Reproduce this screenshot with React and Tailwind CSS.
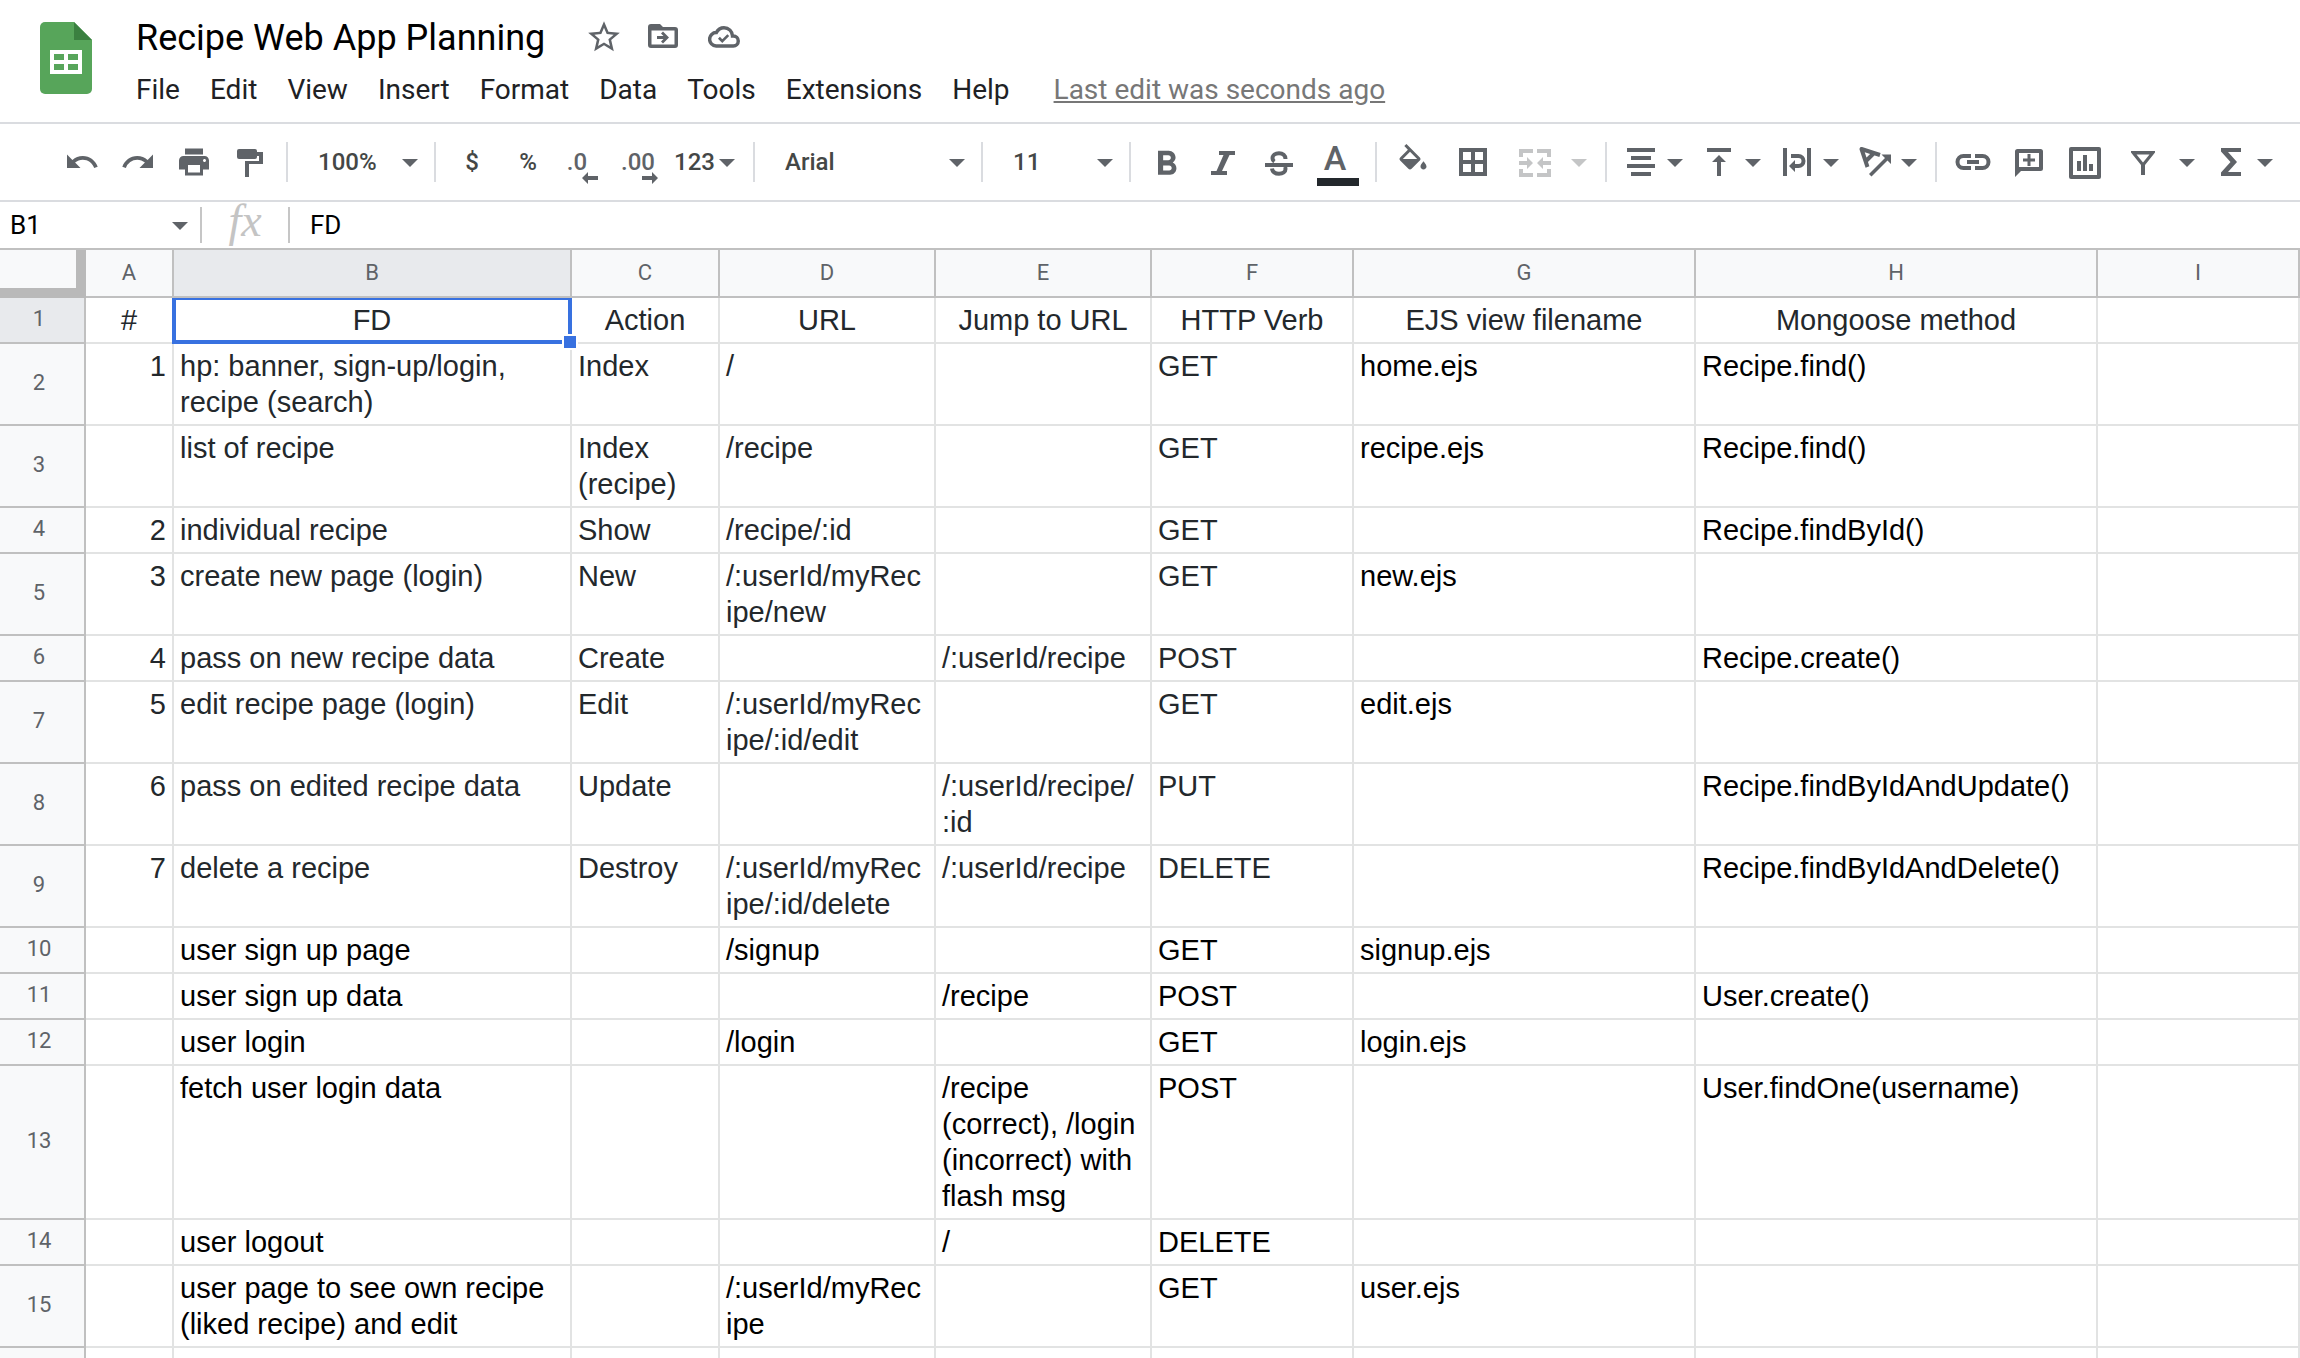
import React from "react";
import { MdStarBorder, MdUndo, MdRedo, MdPrint, MdFormatBold } from "react-icons/md";

const Svg = ({ children, className = "" }) => (
  <svg viewBox="0 0 36 36" className={`size-9 shrink-0 ${className}`} fill="currentColor" aria-hidden="true">
    {children}
  </svg>
);

const Caret = ({ className = "" }) => (
  <svg viewBox="0 0 16 12" className={`h-3 w-4 shrink-0 ${className}`} fill="currentColor" aria-hidden="true">
    <path d="M0 3h16l-8 8z" />
  </svg>
);

const Divider = ({ className = "mx-2" }) => <div className={`h-10 w-0.5 shrink-0 bg-[#dadce0] ${className}`} />;

const Tool = ({ label, className = "w-14", children }) => (
  <button type="button" aria-label={label} className={`flex h-14 shrink-0 items-center justify-center ${className}`}>
    {children}
  </button>
);

const MenuTool = ({ label, className = "", children }) => (
  <button type="button" aria-label={label} className={`flex h-14 w-[78px] shrink-0 items-center gap-2 pl-2 ${className}`}>
    {children}
    <Caret />
  </button>
);

const Drop = ({ label, value, className }) => (
  <div className={`relative shrink-0 ${className}`}>
    <select
      aria-label={label}
      defaultValue={value}
      className="h-14 w-full appearance-none bg-transparent pl-[22px] font-medium text-[#444746] outline-none"
    >
      <option>{value}</option>
    </select>
    <Caret className="pointer-events-none absolute top-[22px] right-2" />
  </div>
);

const PaintRoller = () => (
  <Svg>
    <path d="M7 5h16a2 2 0 0 1 2 2v1h6v12H17v13h-4V17h14v-5h-2v1a2 2 0 0 1-2 2H7a2 2 0 0 1-2-2V7a2 2 0 0 1 2-2z" />
  </Svg>
);

const Italic = () => (
  <Svg>
    <path d="M14 7h16v4h-5.500l-7.500 16H22v4H6v-4h5.500l7-16H14z" />
  </Svg>
);

const Strike = () => (
  <Svg>
    <path d="M4 19h28v4H4z" />
    <path
      d="M24.500 15c0-3.500-2.700-5.800-6.500-5.800-3.800 0-6.500 2-6.500 4.800 0 1.500.6 2.700 1.900 3.600M11 24.500c.3 3.200 3 5.300 7 5.300 3.900 0 6.500-1.900 6.500-4.800 0-.9-.2-1.600-.6-2.300"
      fill="none"
      stroke="currentColor"
      strokeWidth="4"
    />
  </Svg>
);

const Bucket = () => (
  <svg viewBox="0 0 24 24" className="size-9 shrink-0" fill="currentColor" aria-hidden="true">
    <path d="M16.560 8.940L7.620 0 6.210 1.410l2.380 2.380-5.150 5.150a1.490 1.490 0 0 0 0 2.120l5.500 5.500c.29.29.68.44 1.060.44s.77-.15 1.060-.44l5.500-5.500c.59-.58.59-1.530 0-2.120zM5.210 10L10 5.210 14.790 10zM19 11.500s-2 2.170-2 3.500c0 1.100.9 2 2 2s2-.9 2-2c0-1.330-2-3.500-2-3.500z" />
  </svg>
);

const Borders = () => (
  <Svg>
    <path fillRule="evenodd" d="M4 4h28v28H4zM8 8v8h8V8zM20 8v8h8V8zM8 20v8h8v-8zM20 20v8h8v-8z" />
  </Svg>
);

const Merge = () => (
  <Svg>
    <path d="M2 5h14v4H6v4H2zM20 5h14v8h-4V9H20zM2 25h4v4h10v4H2zM30 25h4v8H20v-4h10zM2 17h8v-4l6 6-6 6v-4H2zM34 17h-8v-4l-6 6 6 6v-4h8z" />
  </Svg>
);

const AlignCenter = () => (
  <Svg>
    <path d="M4 4h28v4H4zM8 12h20v4H8zM4 20h28v4H4zM8 28h20v4H8z" />
  </Svg>
);

const AlignTop = () => (
  <Svg>
    <path d="M6 4h24v4H6zM18 11l7 7h-5v14h-4V18h-5z" />
  </Svg>
);

const Wrap = () => (
  <Svg>
    <path d="M4 4h4v28H4zM28 4h4v28h-4zM10 22l6-6v12z" />
    <path d="M12 12h7.500a5 5 0 0 1 0 10H15" fill="none" stroke="currentColor" strokeWidth="4" />
  </Svg>
);

const Rotate = () => (
  <Svg>
    <path d="M23 11L4.500 5l6 18M16.500 9.500l-7.500 7.500" fill="none" stroke="currentColor" strokeWidth="4" strokeLinejoin="round" />
    <path d="M12 30L28 14l-3.500-3.500H34V20l-3.500-3.500-16 16z" />
  </Svg>
);

const LinkIcon = () => (
  <Svg>
    <path
      d="M16 12H8.500a6 6 0 0 0 0 12H16M20 12h7.500a6 6 0 0 1 0 12H20M12 18h12"
      fill="none"
      stroke="currentColor"
      strokeWidth="4"
    />
  </Svg>
);

const Comment = () => (
  <Svg>
    <path fillRule="evenodd" d="M6.500 5h23A2.500 2.500 0 0 1 32 7.500v17a2.500 2.500 0 0 1-2.500 2.500H10l-6 6V7.500A2.500 2.500 0 0 1 6.500 5zM8 9v14h20V9z" />
    <path d="M16.500 10h3v4.500H24v3h-4.500V22h-3v-4.500H12v-3h4.500z" />
  </Svg>
);

const Chart = () => (
  <Svg>
    <path fillRule="evenodd" d="M4 3h28a2 2 0 0 1 2 2v28a2 2 0 0 1-2 2H4a2 2 0 0 1-2-2V5a2 2 0 0 1 2-2zM6 7v24h24V7z" />
    <path d="M10 17h4v10h-4zM16 11h4v16h-4zM22 20h4v7h-4z" />
  </Svg>
);

const Filter = () => (
  <Svg>
    <path fillRule="evenodd" d="M6 7h24v1.500L20 21v10h-4V21L6 8.500zM11.500 10.500L18 18.500l6.500-8z" />
  </Svg>
);

const Sigma = () => (
  <Svg>
    <path d="M8 4h20v4H15l9 10-9 10h13v4H8v-3.500L17.500 18 8 7.500z" />
  </Svg>
);

const DecimalArrow = ({ flip }) => (
  <svg
    viewBox="0 0 16 12"
    className={`absolute top-[38px] h-3 w-4 ${flip ? "right-2.5" : "right-3.5"}`}
    fill="currentColor"
    aria-hidden="true"
  >
    <path d={flip ? "M16 6l-6-6v4H0v4h10v4z" : "M0 6l6-6v4h10v4H6v4z"} />
  </svg>
);

const menus = ["File", "Edit", "View", "Insert", "Format", "Data", "Tools", "Extensions", "Help"];

function Header() {
  return (
    <header className="flex pb-3.5 pl-10">
      <svg viewBox="0 0 52 72" className="mt-[22px] h-[72px] w-[52px] shrink-0" role="img" aria-label="Sheets">
        <path d="M5 0h29l18 18v49a5 5 0 0 1-5 5H5a5 5 0 0 1-5-5V5a5 5 0 0 1 5-5z" fill="#57a55a" />
        <path d="M34 0l18 18H34z" fill="#3b8040" />
        <path fillRule="evenodd" fill="#fff" d="M10 28h32v24H10zM14 32v6h10v-6zM28 32v6h10v-6zM14 42v6h10v-6zM28 42v6h10v-6z" />
      </svg>
      <div className="ml-11 pt-4">
        <div className="flex h-11 items-center text-[#5f6368]">
          <h1 className="text-[36px] whitespace-nowrap text-black">Recipe Web App Planning</h1>
          <div className="flex items-center pb-0.5 pl-10">
            <button type="button" aria-label="Star">
              <MdStarBorder className="size-[38px]" />
            </button>
            <button type="button" aria-label="Move" className="ml-[22px]">
              <Svg>
                <path
                  fillRule="evenodd"
                  d="M6 5h9l3 3h12a3 3 0 0 1 3 3v15a3 3 0 0 1-3 3H6a3 3 0 0 1-3-3V8a3 3 0 0 1 3-3zM6.500 11.500v14h23v-14z"
                />
                <path d="M18 12.500l6 6-6 6-2-2 2.500-2.500H12v-3h6.500L16 14.500z" />
              </Svg>
            </button>
            <button type="button" aria-label="Saved to Drive" className="ml-[27px]">
              <svg viewBox="0 0 24 24" className="size-8" fill="none" stroke="currentColor" strokeWidth="2.600" aria-hidden="true">
                <path d="M18.400 11.300A6.400 6.400 0 0 0 12 5c-2.400 0-4.600 1.400-5.700 3.700A4.850 4.850 0 0 0 6.100 18.700H19a3.700 3.700 0 0 0 0-7.400z" />
                <path d="M8.200 12.600l2.500 2.500 4.500-4.500" strokeWidth="2" />
              </svg>
            </button>
          </div>
        </div>
        <nav className="mt-3 flex h-9 items-center gap-[30px] text-[28px] whitespace-nowrap text-[#202124]">
          {menus.map((m) => (
            <button key={m} type="button">{m}</button>
          ))}
          <a href="#history" className="ml-3.5 text-[#777] underline underline-offset-2">Last edit was seconds ago</a>
        </nav>
      </div>
    </header>
  );
}

function Toolbar() {
  return (
    <div
      role="toolbar"
      aria-label="Formatting"
      className="flex h-20 items-center overflow-hidden border-y-2 border-[#dadce0] pl-[54px] text-[24px] font-medium text-[#5f6368]"
    >
      <Tool label="Undo"><MdUndo className="size-9" /></Tool>
      <Tool label="Redo"><MdRedo className="size-9" /></Tool>
      <Tool label="Print"><MdPrint className="size-9" /></Tool>
      <Tool label="Paint format"><PaintRoller /></Tool>
      <Divider />
      <Drop label="Zoom" value="100%" className="w-[130px]" />
      <Divider />
      <Tool label="Currency" className="w-14 text-[#444746]">$</Tool>
      <Tool label="Percent" className="w-14 text-[#444746]">%</Tool>
      <Tool label="Decrease decimals" className="relative w-14 pr-3.5">.0<DecimalArrow /></Tool>
      <Tool label="Increase decimals" className="relative w-14 pr-1">.00<DecimalArrow flip /></Tool>
      <Tool label="Number formats" className="w-[77px] gap-1 pr-1">
        <span className="text-[#444746]">123</span>
        <Caret />
      </Tool>
      <Divider />
      <Drop label="Font" value="Arial" className="w-[210px]" />
      <Divider />
      <Drop label="Font size" value="11" className="w-[130px]" />
      <Divider />
      <Tool label="Bold"><MdFormatBold viewBox="1.75 0 21 21" className="size-9" /></Tool>
      <Tool label="Italic"><Italic /></Tool>
      <Tool label="Strikethrough"><Strike /></Tool>
      <Tool label="Text color" className="relative w-14 pb-2 text-[34px]">
        A
        <span className="absolute right-1 bottom-1 h-2 w-[42px] bg-[#23282c]" />
      </Tool>
      <Divider className="mr-2 ml-3" />
      <Tool label="Fill color"><Bucket /></Tool>
      <Tool label="Borders" className="w-16"><Borders /></Tool>
      <Tool label="Merge cells" className="w-[60px] text-[#c4c5c6]"><Merge /></Tool>
      <Tool label="Merge type" className="w-7 text-[#c4c5c6]"><Caret /></Tool>
      <Divider className="mr-2 ml-3" />
      <MenuTool label="Horizontal align"><AlignCenter /></MenuTool>
      <MenuTool label="Vertical align"><AlignTop /></MenuTool>
      <MenuTool label="Text wrapping"><Wrap /></MenuTool>
      <MenuTool label="Text rotation"><Rotate /></MenuTool>
      <Divider />
      <Tool label="Insert link"><LinkIcon /></Tool>
      <Tool label="Insert comment"><Comment /></Tool>
      <Tool label="Insert chart"><Chart /></Tool>
      <Tool label="Create a filter" className="w-[60px]"><Filter /></Tool>
      <Tool label="Filter views" className="w-7"><Caret /></Tool>
      <MenuTool label="Functions" className="ml-1"><Sigma /></MenuTool>
    </div>
  );
}

function FormulaBar() {
  return (
    <div className="flex h-12 items-center border-b-2 border-[#c0c0c0] text-[26px] text-black">
      <input aria-label="Name box" defaultValue="B1" className="h-full w-[172px] shrink-0 pl-2.5 outline-none" />
      <button type="button" aria-label="Named ranges" className="mr-3 text-[#5f6368]">
        <Caret className="block" />
      </button>
      <div className="h-9 w-0.5 shrink-0 bg-[#c6c6c6]" />
      <label
        htmlFor="formula"
        className="w-[86px] shrink-0 pb-2 text-center font-['Liberation_Serif',serif] text-[46px] leading-9 text-[#c4c4c4] italic"
      >
        fx
      </label>
      <div className="h-9 w-0.5 shrink-0 bg-[#c6c6c6]" />
      <input id="formula" defaultValue="FD" className="h-full min-w-0 flex-1 pl-5 outline-none" />
    </div>
  );
}

const columns = [
  ["A", "w-[88px]"],
  ["B", "w-[398px]"],
  ["C", "w-[148px]"],
  ["D", "w-[216px]"],
  ["E", "w-[216px]"],
  ["F", "w-[202px]"],
  ["G", "w-[342px]"],
  ["H", "w-[402px]"],
  ["I", ""],
];

const rows = [
  ["#", "FD", "Action", "URL", "Jump to URL", "HTTP Verb", "EJS view filename", "Mongoose method", ""],
  ["1", "hp: banner, sign-up/login,\nrecipe (search)", "Index", "/", "", "GET", "home.ejs", "Recipe.find()", ""],
  ["", "list of recipe", "Index\n(recipe)", "/recipe", "", "GET", "recipe.ejs", "Recipe.find()", ""],
  ["2", "individual recipe", "Show", "/recipe/:id", "", "GET", "", "Recipe.findById()", ""],
  ["3", "create new page (login)", "New", "/:userId/myRec\nipe/new", "", "GET", "new.ejs", "", ""],
  ["4", "pass on new recipe data", "Create", "", "/:userId/recipe", "POST", "", "Recipe.create()", ""],
  ["5", "edit recipe page (login)", "Edit", "/:userId/myRec\nipe/:id/edit", "", "GET", "edit.ejs", "", ""],
  ["6", "pass on edited recipe data", "Update", "", "/:userId/recipe/\n:id", "PUT", "", "Recipe.findByIdAndUpdate()", ""],
  ["7", "delete a recipe", "Destroy", "/:userId/myRec\nipe/:id/delete", "/:userId/recipe", "DELETE", "", "Recipe.findByIdAndDelete()", ""],
  ["", "user sign up page", "", "/signup", "", "GET", "signup.ejs", "", ""],
  ["", "user sign up data", "", "", "/recipe", "POST", "", "User.create()", ""],
  ["", "user login", "", "/login", "", "GET", "login.ejs", "", ""],
  ["", "fetch user login data", "", "", "/recipe\n(correct), /login\n(incorrect) with\nflash msg", "POST", "", "User.findOne(username)", ""],
  ["", "user logout", "", "", "/", "DELETE", "", "", ""],
  ["", "user page to see own recipe\n(liked recipe) and edit", "", "/:userId/myRec\nipe", "", "GET", "user.ejs", "", ""],
];

function Cell({ text, row, col }) {
  const align = row === 0 ? "text-center" : col === 0 ? "text-right" : "text-left";
  const color = row === 0 || (row < 9 && col < 6) ? "text-[#23282c]" : "text-black";
  const selected = row === 0 && col === 1;
  return (
    <td className={`relative h-[46px] border-r-2 border-b-2 border-[#e2e3e3] px-1.5 py-1 align-top whitespace-pre ${align} ${color}`}>
      {text}
      {selected && (
        <>
          <span className="absolute top-0 -right-0.5 -bottom-0.5 -left-0.5 z-10 border-x-4 border-t-2 border-b-4 border-[#3871e0]" />
          <span className="absolute -right-1.5 -bottom-1.5 z-20 size-3 bg-[#3871e0] outline-2 outline-white" />
        </>
      )}
    </td>
  );
}

const rowHead =
  "border-r-2 border-b-2 border-[#c0c0c0] p-0 pb-0.5 align-middle font-['Roboto',sans-serif] text-[22px] leading-6 font-normal text-[#5f6368]";

function Grid() {
  return (
    <table className="w-full table-fixed border-separate border-spacing-0 font-['Liberation_Sans',Arial,sans-serif] text-[29px] leading-9">
      <colgroup>
        <col className="w-[86px]" />
        {columns.map(([name, width]) => (
          <col key={name} className={width} />
        ))}
      </colgroup>
      <thead>
        <tr className="h-12 font-['Roboto',sans-serif] text-[22px] leading-6 text-[#5f6368]">
          <td className="border-r-[10px] border-b-[10px] border-[#b9b9b9] bg-[#f8f9fa]" />
          {columns.map(([name]) => (
            <th
              key={name}
              scope="col"
              className={`border-r-2 border-b-2 border-[#c0c0c0] p-0 font-normal ${name === "B" ? "bg-[#e8eaed]" : "bg-[#f8f9fa]"}`}
            >
              {name}
            </th>
          ))}
        </tr>
      </thead>
      <tbody>
        {rows.map((cells, r) => (
          <tr key={r}>
            <th scope="row" className={`${rowHead} ${r === 0 ? "bg-[#e8eaed]" : "bg-[#f8f9fa]"}`}>
              <span className="block pr-1.5">{r + 1}</span>
            </th>
            {cells.map((text, c) => (
              <Cell key={c} text={text} row={r} col={c} />
            ))}
          </tr>
        ))}
        <tr>
          <td className={`${rowHead} bg-[#f8f9fa]`} />
          {columns.map(([name], c) => (
            <Cell key={name} text="" row={rows.length} col={c} />
          ))}
        </tr>
      </tbody>
    </table>
  );
}

export default function App() {
  return (
    <main className="h-screen overflow-hidden bg-white font-['Roboto',sans-serif]">
      <Header />
      <Toolbar />
      <FormulaBar />
      <Grid />
    </main>
  );
}
